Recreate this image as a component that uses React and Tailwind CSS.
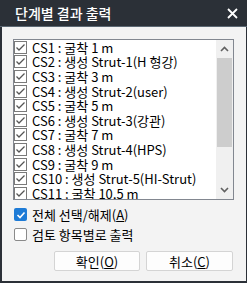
import React from "react";

const items = [
  "CS1 : 굴착 1 m",
  "CS2 : 생성 Strut-1(H 형강)",
  "CS3 : 굴착 3 m",
  "CS4 : 생성 Strut-2(user)",
  "CS5 : 굴착 5 m",
  "CS6 : 생성 Strut-3(강관)",
  "CS7 : 굴착 7 m",
  "CS8 : 생성 Strut-4(HPS)",
  "CS9 : 굴착 9 m",
  "CS10 : 생성 Strut-5(HI-Strut)",
  "CS11 : 굴착 10,5 m",
  "CS12 : 생성 Earth Anchor-6",
];

function GrayCheck() {
  return (
    <div className="w-[13px] h-[13px] border border-[#7a7a7a] bg-white shrink-0 flex items-center justify-center">
      <svg width="11" height="11" viewBox="0 0 11 11">
        <path d="M1.5 5.5 L4 8 L9.5 2.5" fill="none" stroke="#555" strokeWidth="1.3" />
      </svg>
    </div>
  );
}

export default function App() {
  const font = { fontFamily: '"Noto Sans CJK KR", "Noto Sans", sans-serif' };
  return (
    <div
      className="w-[247px] h-[283px] bg-[#2b3037] flex flex-col overflow-hidden"
      style={font}
    >
      <div className="h-[26px] flex items-center justify-between pl-[15px] pr-[9px] shrink-0">
        <span className="text-white text-[14px] font-medium leading-none">단계별 결과 출력</span>
        <svg width="11" height="11" viewBox="0 0 11 11">
          <path d="M1 1 L10 10 M10 1 L1 10" stroke="#fff" strokeWidth="1.8" />
        </svg>
      </div>
      <div className="h-[1px] bg-[#5c6873] shrink-0" />
      <div className="flex-1 bg-[#f3f3f3] ml-[2px] mr-[1px] mb-[2px] pl-[11px] pt-[12px] flex flex-col">
        <div className="w-[221px] h-[161px] border border-[#828790] bg-white flex">
          <div className="flex-1 overflow-hidden">
            {items.map((t) => (
              <div key={t} className="h-[14.6px] flex items-center gap-[5px] whitespace-nowrap">
                <GrayCheck />
                <span className="text-[13px] leading-none text-black">{t}</span>
              </div>
            ))}
          </div>
          <div className="w-[17px] bg-[#f0f0f0] flex flex-col shrink-0">
            <div className="h-[18px] flex items-center justify-center">
              <svg width="9" height="6" viewBox="0 0 9 6">
                <path d="M1 5 L4.5 1.5 L8 5" fill="none" stroke="#606060" strokeWidth="1.6" />
              </svg>
            </div>
            <div className="mx-[1px] h-[89px] bg-[#cdcdcd]" />
            <div className="flex-1" />
            <div className="h-[18px] flex items-center justify-center">
              <svg width="9" height="6" viewBox="0 0 9 6">
                <path d="M1 1 L4.5 4.5 L8 1" fill="none" stroke="#606060" strokeWidth="1.6" />
              </svg>
            </div>
          </div>
        </div>
        <div className="mt-[8px] h-[13px] flex items-center gap-[5px] pl-[1px]">
          <div className="w-[13px] h-[13px] rounded-[2px] bg-[#1e7bd6] flex items-center justify-center">
            <svg width="10" height="10" viewBox="0 0 10 10">
              <path d="M1.5 5 L4 7.5 L8.5 2.5" fill="none" stroke="#fff" strokeWidth="1.6" />
            </svg>
          </div>
          <span className="text-[13px] leading-none text-black">
            전체 선택/해제(<span className="underline">A</span>)
          </span>
        </div>
        <div className="mt-[7px] h-[13px] flex items-center gap-[5px] pl-[1px]">
          <div className="w-[13px] h-[13px] rounded-[2px] border border-[#8a8a8a] bg-white" />
          <span className="text-[13px] leading-none text-black">검토 항목별로 출력</span>
        </div>
        <div className="mt-[10px] flex gap-[6px] pl-[41px]">
          <button className="w-[86px] h-[20px] bg-[#fdfdfd] border border-[#d4d4d4] rounded-[2px] text-[13px] leading-none text-black flex items-center justify-center">
            확인(<span className="underline">O</span>)
          </button>
          <button className="w-[87px] h-[20px] bg-[#fdfdfd] border border-[#d4d4d4] rounded-[2px] text-[13px] leading-none text-black flex items-center justify-center">
            취소(<span className="underline">C</span>)
          </button>
        </div>
      </div>
    </div>
  );
}
